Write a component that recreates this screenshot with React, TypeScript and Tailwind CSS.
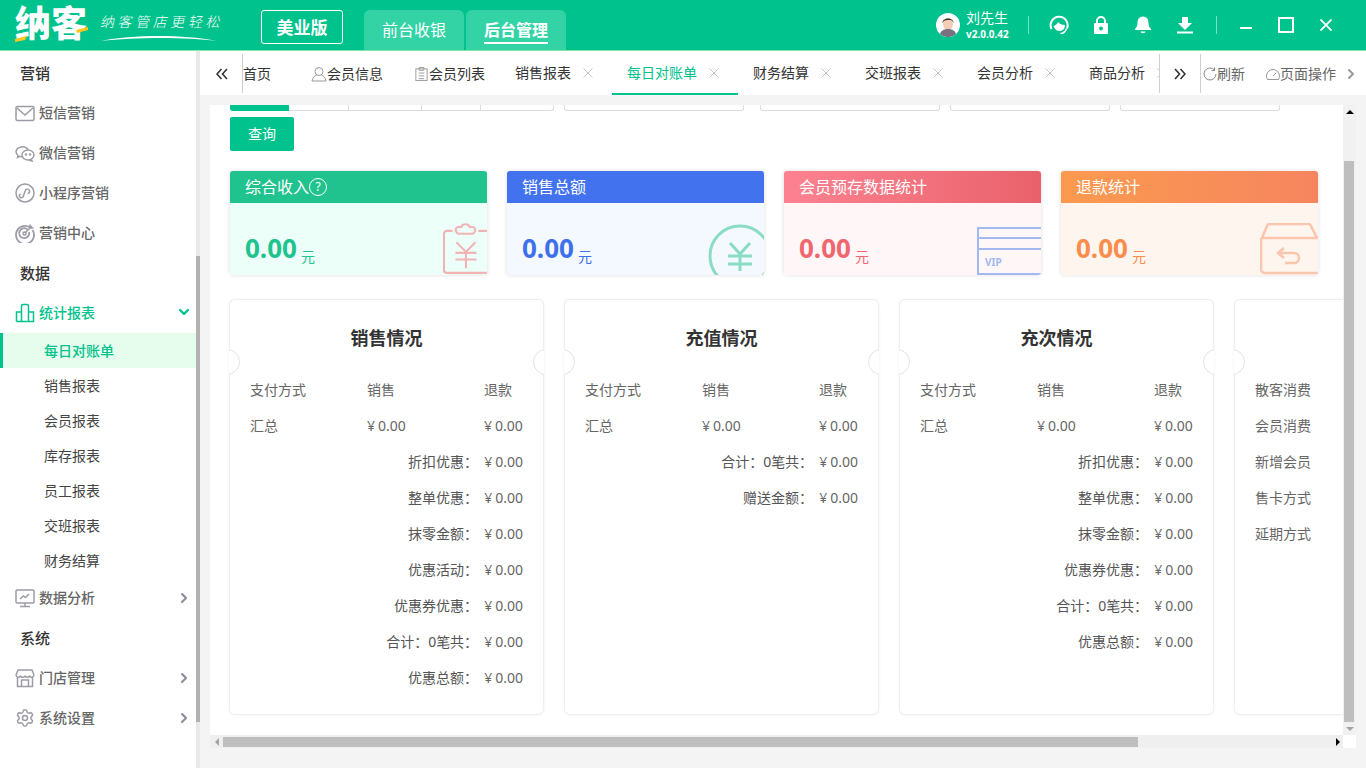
import { ChevronDown, ChevronRight, Settings } from "lucide-react";
import type { ReactNode } from "react";

const font = "font-['Noto_Sans','Noto_Sans_CJK_SC',sans-serif]";

function IconBox({ children, cls = "w-5 h-5" }: { children: ReactNode; cls?: string }) {
  return (
    <svg viewBox="0 0 20 20" fill="none" stroke="currentColor" strokeWidth="1.5" className={cls}>
      {children}
    </svg>
  );
}

const sideIcons: Record<string, ReactNode> = {
  mail: (
    <IconBox>
      <rect x="1" y="3.5" width="18" height="14" rx="1.5" />
      <path d="M2 5l8 7 8-7" />
    </IconBox>
  ),
  wechat: (
    <IconBox>
      <path d="M13 6.5A6.5 5.5 0 0 0 1 8.5c0 1.8.8 3 2 4l-.5 2 2.4-1.1c.8.3 1.5.4 2.3.4" />
      <ellipse cx="13" cy="12" rx="6" ry="5" />
      <path d="M16 16l1 2-3-1" />
      <circle cx="11" cy="11.5" r=".5" />
      <circle cx="15" cy="11.5" r=".5" />
    </IconBox>
  ),
  mini: (
    <IconBox>
      <circle cx="10" cy="10" r="9" />
      <path d="M6 12.5a2 2 0 1 0 3.5 1V7.5a2.2 2.2 0 1 1 3.2 2" transform="rotate(20 10 10)" />
    </IconBox>
  ),
  target: (
    <IconBox>
      <path d="M15 4.5A9 9 0 1 0 17.5 7" strokeWidth="1.8" />
      <path d="M12.5 6.5A5 5 0 1 0 14 9" strokeWidth="1.8" />
      <circle cx="9.5" cy="10.5" r="1.5" />
      <path d="M10 10l7-7M15 1.5V5h3.5" />
    </IconBox>
  ),
  bars: (
    <IconBox>
      <path d="M1.5 18.5h17V9H13.5M6.5 18.5V9h-5v9.5M6.5 18.5V3a1.5 1.5 0 0 1 1.5-1.5h4A1.5 1.5 0 0 1 13.5 3v15.5" />
    </IconBox>
  ),
  screen: (
    <IconBox>
      <rect x="1" y="2" width="18" height="13" rx="1" />
      <path d="M10 15v3.5M5 18.5h10M5 11l3.500-3 2 1.500L14 6" />
    </IconBox>
  ),
  shop: (
    <IconBox>
      <path d="M3 2h14l2 5a2.500 2.500 0 0 1-4.500 1.200 3 3 0 0 1-4.500 0 3 3 0 0 1-4.500 0A2.500 2.500 0 0 1 1 7z" />
      <path d="M2.500 9v9.500h15V9M6.500 18.500V12h7v6.500" />
    </IconBox>
  ),
  gear: <Settings className="w-5 h-5" strokeWidth={1.8} />,
};

function SectionTitle({ text }: { text: string }) {
  return <div className="h-10 flex items-center pl-5 text-[15px] font-medium text-[#333]">{text}</div>;
}

function SideItem({ icon, text, arrow, active }: { icon: string; text: string; arrow?: boolean; active?: boolean }) {
  return (
    <div className={`h-10 flex items-center pl-[15px] pr-1 gap-1 text-sm font-medium ${active ? "text-[#00c28c]" : "text-[#666]"}`}>
      <span className={active ? "text-[#00c28c]" : "text-[#9c9ca6]"}>{sideIcons[icon]}</span>
      <span className="flex-1">{text}</span>
      {active && <ChevronDown className="w-4 h-4 text-[#00c28c] -mt-[3px]" strokeWidth={3.5} />}
      {arrow && <ChevronRight className="w-4 h-4 text-[#8a8a94]" strokeWidth={3} />}
    </div>
  );
}

function SubItem({ text, active }: { text: string; active?: boolean }) {
  return (
    <div
      className={`h-[35px] flex items-center text-sm ${
        active ? "bg-[#e6fdee] text-[#00c28c] font-medium border-l-[3px] border-[#00c28c] pl-[41px]" : "text-[#444] pl-[44px]"
      }`}
    >
      {text}
    </div>
  );
}

function Sidebar() {
  return (
    <aside className="w-[200px] shrink-0 bg-white flex">
      <div className="w-[196px] pt-[2px]">
        <SectionTitle text="营销" />
        <SideItem icon="mail" text="短信营销" />
        <SideItem icon="wechat" text="微信营销" />
        <SideItem icon="mini" text="小程序营销" />
        <SideItem icon="target" text="营销中心" />
        <SectionTitle text="数据" />
        <SideItem icon="bars" text="统计报表" active />
        <SubItem text="每日对账单" active />
        <SubItem text="销售报表" />
        <SubItem text="会员报表" />
        <SubItem text="库存报表" />
        <SubItem text="员工报表" />
        <SubItem text="交班报表" />
        <SubItem text="财务结算" />
        <SideItem icon="screen" text="数据分析" arrow />
        <SectionTitle text="系统" />
        <SideItem icon="shop" text="门店管理" arrow />
        <SideItem icon="gear" text="系统设置" arrow />
      </div>
      <div className="w-1 bg-[#e9e9e9] pt-[205px]">
        <div className="h-[466px] bg-[#b2b2b2]" />
      </div>
    </aside>
  );
}

function Header() {
  return (
    <header className="h-[51px] shrink-0 bg-[#00c28c] border-b border-[#7fe8a9] flex items-stretch text-white">
      <div className="w-[261px] pl-[15px] flex items-center gap-[14px] relative">
        <span className="text-[36px] leading-none font-black mt-[-2px] whitespace-nowrap">纳客</span>
        <div className="flex flex-col items-start mt-[7px]">
          <span className="text-[14px] leading-none tracking-[3.600px] skew-x-[-12deg] font-light whitespace-nowrap">
            纳客管店更轻松
          </span>
          <svg viewBox="0 0 116 8" className="w-[116px] h-2 mt-[5px]" fill="#fff">
            <path d="M0 7C30 1 80 0 116 7 85 3 35 3 0 7z" />
          </svg>
        </div>
        <svg viewBox="0 0 12 6" className="absolute left-[15px] top-[36px] w-3 h-[6px]" fill="#ffc61a">
          <path d="M0 3l12-3-2 4-10 2z" />
        </svg>
        <svg viewBox="0 0 12 6" className="absolute left-[76px] top-[27px] w-3 h-[6px]" fill="#ffc61a">
          <path d="M0 3l12-3v3L1 6z" />
        </svg>
      </div>
      <div className="w-[82px] h-[34px] mt-[10px] border border-white rounded-[3px] flex items-center justify-center text-[17px] leading-none font-bold">
        美业版
      </div>
      <div className="ml-[21px] mt-[10px] w-[100px] rounded-t-[6px] bg-[#33d3a6] flex items-center justify-center text-base">
        前台收银
      </div>
      <div className="ml-[2px] mt-[10px] w-[100px] rounded-t-[6px] bg-[#33d3a6] flex items-center justify-center text-base font-bold">
        <span className="border-b-2 border-white leading-[24px] mt-[2px]">后台管理</span>
      </div>
      <div className="flex-1" />
      <div className="flex items-center">
        <svg viewBox="0 0 24 24" className="w-6 h-6">
          <circle cx="12" cy="12" r="12" fill="#fff" />
          <ellipse cx="12" cy="11" rx="5" ry="6" fill="#f2cdb4" />
          <path d="M6.500 10C6 4 18 4 17.500 10c-1-2.500-2-3-5.500-3S7.500 8 6.500 10z" fill="#3b3a3a" />
          <path d="M4 21c1-4 5-5 8-5s7 1 8 5a12 12 0 0 1-16 0z" fill="#777280" />
        </svg>
        <div className="ml-[6px] w-[62px] flex flex-col">
          <span className="text-sm leading-[18px]">刘先生</span>
          <span className="text-[10px] leading-[14px] font-bold">v2.0.0.42</span>
        </div>
        <div className="w-px h-[18px] bg-[#7fe0c5]" />
        <div className="ml-[20px] w-5 flex justify-center">
          <svg viewBox="0 0 20 20" className="w-[21px] h-[21px]" fill="none" stroke="#fff" strokeWidth="2">
            <path d="M2.500 13.500A8.500 8.500 0 1 1 18 13" />
            <path d="M4.500 10.500c2-.5 3.500-2 4.500-4 1.500 2 4 3 7 3 0 3.500-2 6-5.500 6-3 0-5-2-6-5z" fill="#fff" stroke="none" />
            <path d="M17.500 13c-1 3-3.500 5-6 5" strokeWidth="1.500" />
          </svg>
        </div>
        <div className="ml-[22px] w-5 flex justify-center">
          <svg viewBox="0 0 20 20" className="w-5 h-5" fill="#fff">
            <path d="M6 8V6a4 4 0 0 1 8 0v2" fill="none" stroke="#fff" strokeWidth="2" />
            <path d="M4 8h12a1 1 0 0 1 1 1v9a1 1 0 0 1-1 1H4a1 1 0 0 1-1-1V9a1 1 0 0 1 1-1z" />
            <circle cx="10" cy="13.500" r="2" fill="#00c28c" />
          </svg>
        </div>
        <div className="ml-[22px] w-5 flex justify-center">
          <svg viewBox="0 0 20 20" className="w-5 h-5" fill="#fff">
            <path d="M10 1.500c-4 0-5.500 3-5.500 6.500 0 3-1 4.500-2.500 6v1h16v-1c-1.500-1.500-2.500-3-2.500-6 0-3.500-1.500-6.500-5.500-6.500z" />
            <path d="M7.500 16.500h5a2.500 1.800 0 0 1-5 0z" />
          </svg>
        </div>
        <div className="ml-[22px] w-5 flex justify-center">
          <svg viewBox="0 0 20 20" className="w-5 h-5" fill="#fff">
            <path d="M7 2h6v6h4l-7 7-7-7h4z" />
            <rect x="2" y="16.500" width="16" height="2" />
          </svg>
        </div>
        <div className="ml-[21px] w-px h-[18px] bg-[#7fe0c5]" />
        <div className="ml-[23px] w-[12px] h-[2px] bg-white mt-[6px]" />
        <div className="ml-[26px] w-4 h-4 border-2 border-white" />
        <svg viewBox="0 0 12 12" className="ml-[26px] mr-[34px] w-3 h-3" stroke="#fff" strokeWidth="1.800">
          <path d="M.5.500l11 11M11.500.500l-11 11" />
        </svg>
      </div>
    </header>
  );
}

function CloseX() {
  return (
    <svg viewBox="0 0 10 10" className="w-[10px] h-[10px] shrink-0" stroke="#c4c4c4" strokeWidth="1">
      <path d="M.5.500l9 9M9.500.500l-9 9" />
    </svg>
  );
}

function ClosableTab({ text, active, cls = "w-[112px]" }: { text: string; active?: boolean; cls?: string }) {
  return (
    <div
      className={`${cls} shrink-0 h-full flex items-center pl-[15px] gap-[12px] border-b-2 overflow-hidden ${
        active ? "border-[#00c28c] text-[#00c28c]" : "border-transparent"
      }`}
    >
      <span className="whitespace-nowrap">{text}</span>
      <CloseX />
    </div>
  );
}

function TabBar() {
  return (
    <div className="h-11 shrink-0 pt-px bg-white flex items-stretch text-sm text-[#333]">
      <div className="w-[42px] flex items-center justify-center pl-[1px] text-[#333]">
        <svg viewBox="0 0 12 12" className="w-3 h-3" fill="none" stroke="#333" strokeWidth="1.600">
          <path d="M5.500 1L1 6l4.500 5M11 1L6.500 6l4.500 5" />
        </svg>
      </div>
      <div className="w-px my-[2px] bg-[#cfcfcf]" />
      <div className="w-[53px] flex items-center">首页</div>
      <div className="w-[103px] pl-[15px] flex items-center whitespace-nowrap">
        <svg viewBox="0 0 16 16" className="w-4 h-4 shrink-0" fill="none" stroke="#999" strokeWidth="1">
          <circle cx="8" cy="5.500" r="4" />
          <path d="M1 15c.5-3.500 2.500-5 4.500-6M15 15c-.5-3.500-2.500-5-4.500-6M1 15h14" />
        </svg>
        会员信息
      </div>
      <div className="w-[101px] pl-[15px] flex items-center whitespace-nowrap">
        <svg viewBox="0 0 16 16" className="w-[15px] h-4 shrink-0" fill="none" stroke="#999" strokeWidth="1">
          <rect x="2" y="2.500" width="12" height="12.500" />
          <path d="M5.500 1h5v3h-5zM5 7h6M5 10h6M5 13h6" />
        </svg>
        会员列表
      </div>
      <ClosableTab text="销售报表" />
      <ClosableTab text="每日对账单" active cls="w-[126px]" />
      <ClosableTab text="财务结算" />
      <ClosableTab text="交班报表" />
      <ClosableTab text="会员分析" />
      <ClosableTab text="商品分析" cls="w-[85px]" />
      <div className="w-px my-[2px] bg-[#cfcfcf]" />
      <div className="w-10 flex items-center justify-center">
        <svg viewBox="0 0 12 12" className="w-3 h-3" fill="none" stroke="#333" strokeWidth="1.600">
          <path d="M1 1l4.500 5L1 11M6.500 1L11 6l-4.500 5" />
        </svg>
      </div>
      <div className="w-px my-[2px] bg-[#cfcfcf]" />
      <div className="w-[65px] pl-[2px] flex items-center text-[#666] whitespace-nowrap">
        <svg viewBox="0 0 14 14" className="w-[14px] h-[14px] shrink-0" fill="none" stroke="#888" strokeWidth="1">
          <path d="M11.500 3A6 6 0 1 0 13 7M11.500.500V3.500H8.500" />
        </svg>
        刷新
      </div>
      <div className="w-[70px] flex items-center text-[#666] whitespace-nowrap">
        <svg viewBox="0 0 14 14" className="w-[14px] h-[14px] shrink-0" fill="none" stroke="#999" strokeWidth="1">
          <path d="M1.500 12.500a6.500 6.500 0 1 1 11 0zM7 9l3-3" />
        </svg>
        页面操作
      </div>
      <div className="flex-1 flex items-center pl-[7px]">
        <ChevronRight className="w-4 h-4 text-[#999]" strokeWidth={3} />
      </div>
    </div>
  );
}

const statIcons: Record<string, ReactNode> = {
  clip: (
    <svg viewBox="0 0 46 54" className="w-[44px] h-[52px]" fill="none" stroke="#f1b3b3" strokeWidth="2.200">
      <path d="M10 8H4a3 3 0 0 0-3 3v38a3 3 0 0 0 3 3h42M37 8h9" />
      <path d="M14 9a3 3 0 0 1 2-5h3a5 5 0 0 1 9 0h3a3 3 0 0 1 2 5 3 3 0 0 1-2 2H16a3 3 0 0 1-2-2z" />
      <path d="M14 20l10 10 10-10M13 31h22M13 38h22M24 30v17" />
    </svg>
  ),
  yuan: (
    <svg viewBox="0 0 56 52" className="w-[56px] h-[52px]" fill="none" stroke="#8adcc4" strokeWidth="3">
      <circle cx="32" cy="33" r="30" />
      <path d="M22 20l10 11 10-11M20 33h24M20 41h24M32 31v17" />
    </svg>
  ),
  vip: (
    <svg viewBox="0 0 64 48" className="w-[64px] h-[48px]" fill="none" stroke="#a3b8f0" strokeWidth="2">
      <path d="M64 1H1v46h63M1 11h63M1 22h63" />
      <text x="8" y="39" fontSize="10" fontWeight="700" fill="#a3b8f0" stroke="none" fontFamily="'Noto Sans',sans-serif">
        VIP
      </text>
    </svg>
  ),
  box: (
    <svg viewBox="0 0 58 52" className="w-[58px] h-[52px]" fill="none" stroke="#fbc6ae" strokeWidth="2.600">
      <path d="M2 15l5-12a3 3 0 0 1 3-2h38a3 3 0 0 1 3 2l6 12M1 15h57M1 15v31a4 4 0 0 0 4 4h53" />
      <path d="M24 25l-6 5 6 5M18 30h16a5 5 0 0 1 0 10h-9" />
    </svg>
  ),
};

function StatCard({
  title, head, body, color, icon, help,
}: {
  title: string; head: string; body: string; color: string; icon: string; help?: boolean;
}) {
  return (
    <div className={`w-[257px] h-[104px] shrink-0 rounded-[3px] overflow-hidden shadow-[0_0_4px_rgba(0,0,0,0.14)] flex flex-col ${body}`}>
      <div className={`h-8 shrink-0 flex items-center pl-[15px] text-base text-white ${head}`}>
        {title}
        {help && (
          <span className="w-[18px] h-[18px] rounded-full border border-white flex items-center justify-center text-xs leading-none">
            ?
          </span>
        )}
      </div>
      <div className="flex-1 relative flex items-end pl-[15px] pb-2">
        <span className={`text-[26px] leading-[37px] font-bold ${color}`}>0.00</span>
        <span className={`ml-[4px] -mb-[2px] text-sm leading-[24px] ${color}`}>元</span>
        <div className="absolute right-0 bottom-0">{statIcons[icon]}</div>
      </div>
    </div>
  );
}

function Notch({ side }: { side: "left" | "right" }) {
  return (
    <div
      className={`absolute top-[49px] w-[11px] h-[26px] overflow-hidden bg-white ${
        side === "left" ? "left-[-1px]" : "right-[-1px]"
      }`}
    >
      <div
        className={`absolute top-0 w-[26px] h-[26px] rounded-full border border-[#e2e2e2] ${
          side === "left" ? "right-0" : "left-0"
        }`}
      />
    </div>
  );
}

type Row = [string, string];

function Money({ value }: { value: string }) {
  return (
    <>
      <span className="mr-[3px]">¥</span>
      {value}
    </>
  );
}

function Ticket({ title, rows }: { title: string; rows: Row[] }) {
  return (
    <div className="w-[315px] h-[416px] shrink-0 relative bg-white rounded-md border border-[#eeeeee] shadow-[0_0_3px_rgba(0,0,0,0.06)] px-5 text-sm text-[#666]">
      <Notch side="left" />
      <Notch side="right" />
      <div className="h-[72px] pt-1 flex items-center justify-center text-lg font-bold text-[#333]">{title}</div>
      <div className="h-9 flex items-center">
        <span className="w-[117px]">支付方式</span>
        <span className="w-[117px]">销售</span>
        <span>退款</span>
      </div>
      <div className="h-9 flex items-center">
        <span className="w-[117px]">汇总</span>
        <span className="w-[117px]"><Money value="0.00" /></span>
        <span><Money value="0.00" /></span>
      </div>
      {rows.map(([label, value]) => (
        <div key={label} className="h-9 flex items-center justify-end">
          <span className="text-[#555] [word-spacing:-4px]">{label}</span>
          <span className="w-[45px] text-right"><Money value={value} /></span>
        </div>
      ))}
    </div>
  );
}

const salesRows: Row[] = [
  ["折扣优惠：", "0.00"],
  ["整单优惠：", "0.00"],
  ["抹零金额：", "0.00"],
  ["优惠活动：", "0.00"],
  ["优惠券优惠：", "0.00"],
  ["合计：0笔 共：", "0.00"],
  ["优惠总额：", "0.00"],
];
const rechargeRows: Row[] = [
  ["合计：0笔 共：", "0.00"],
  ["赠送金额：", "0.00"],
];
const timesRows: Row[] = [
  ["折扣优惠：", "0.00"],
  ["整单优惠：", "0.00"],
  ["抹零金额：", "0.00"],
  ["优惠券优惠：", "0.00"],
  ["合计：0笔 共：", "0.00"],
  ["优惠总额：", "0.00"],
];

function FilterStub({ cls }: { cls: string }) {
  return <div className={`h-[6px] shrink-0 border border-t-0 border-[#dcdcdc] rounded-b-[3px] ${cls}`} />;
}

function Content() {
  return (
    <div className="flex-1 min-w-0 overflow-hidden pl-5">
      <div className="flex h-[6px]">
        <div className="w-[324px] shrink-0 flex border border-t-0 border-[#dcdcdc] rounded-b-[3px]">
          <div className="w-[59px] -mb-px -ml-px bg-[#00c28c] rounded-bl-[3px]" />
          <div className="w-[60px] border-r border-[#dcdcdc]" />
          <div className="w-[72px] border-r border-[#dcdcdc] ml-[1px]" />
          <div className="w-[59px] border-r border-[#dcdcdc]" />
        </div>
        <FilterStub cls="w-[180px] ml-[10px]" />
        <FilterStub cls="w-[180px] ml-[16px]" />
        <FilterStub cls="w-[160px] ml-[10px]" />
        <FilterStub cls="w-[160px] ml-[10px]" />
      </div>
      <button type="button" className="block mt-[6px] w-[64px] h-[34px] bg-[#00c28c] rounded-[2px] text-white text-sm">
        查询
      </button>
      <div className="flex gap-5 mt-5">
        <StatCard title="综合收入" help icon="clip" head="bg-[#20c38d]" body="bg-[#edfff9]" color="text-[#20c38d]" />
        <StatCard title="销售总额" icon="yuan" head="bg-[#4272ee]" body="bg-[#f4f8ff]" color="text-[#3f70ec]" />
        <StatCard title="会员预存数据统计" icon="vip" head="bg-gradient-to-r from-[#fd8291] to-[#e9626b]" body="bg-[#fff7f7]" color="text-[#f0666f]" />
        <StatCard title="退款统计" icon="box" head="bg-gradient-to-r from-[#fb9a4e] to-[#f6855f]" body="bg-[#fff5ef]" color="text-[#fa8c4c]" />
      </div>
      <div className="flex gap-5 mt-6 -ml-px">
        <Ticket title="销售情况" rows={salesRows} />
        <Ticket title="充值情况" rows={rechargeRows} />
        <Ticket title="充次情况" rows={timesRows} />
        <div className="w-[315px] h-[416px] shrink-0 relative bg-white rounded-md border border-[#eeeeee] shadow-[0_0_3px_rgba(0,0,0,0.06)] px-5 text-sm text-[#666] pt-[72px]">
          <Notch side="left" />
          {["散客消费", "会员消费", "新增会员", "售卡方式", "延期方式"].map((l) => (
            <div key={l} className="h-9 flex items-center">{l}</div>
          ))}
        </div>
      </div>
    </div>
  );
}

function VScroll() {
  return (
    <div className="w-[13px] shrink-0 bg-[#f1f1f1] flex flex-col">
      <div className="h-[14px] flex items-center justify-center">
        <div className="w-0 h-0 border-x-[4px] border-x-transparent border-b-[4px] border-b-black" />
      </div>
      <div className="w-[10px] ml-px mt-[42px] h-[561px] bg-[#bebebe]" />
      <div className="flex-1 flex items-center justify-center">
        <div className="w-0 h-0 border-x-[4px] border-x-transparent border-t-[4px] border-t-[#a3a3a3]" />
      </div>
    </div>
  );
}

function HScroll() {
  return (
    <div className="h-[13px] shrink-0 flex">
      <div className="flex-1 bg-[#efefef] flex items-center">
        <div className="w-[13px] flex justify-center">
          <div className="w-0 h-0 border-y-[4px] border-y-transparent border-r-[4px] border-r-[#a3a3a3]" />
        </div>
        <div className="w-[915px] h-[10px] bg-[#bebebe]" />
        <div className="flex-1 flex justify-end pr-[3px]">
          <div className="w-0 h-0 border-y-[4px] border-y-transparent border-l-[4px] border-l-black" />
        </div>
      </div>
      <div className="w-[13px] bg-white" />
    </div>
  );
}

export default function App() {
  return (
    <div className={`w-[1366px] h-[768px] overflow-hidden flex flex-col bg-[#f4f4f4] ${font}`}>
      <Header />
      <div className="flex-1 min-h-0 flex">
        <Sidebar />
        <main className="flex-1 min-w-0 flex flex-col">
          <TabBar />
          <div className="flex-1 min-h-0 pt-[10px] pl-[10px] pr-[10px] pb-5 flex flex-col">
            <div className="flex-1 min-h-0 bg-white flex">
              <Content />
              <VScroll />
            </div>
            <HScroll />
          </div>
        </main>
      </div>
    </div>
  );
}
